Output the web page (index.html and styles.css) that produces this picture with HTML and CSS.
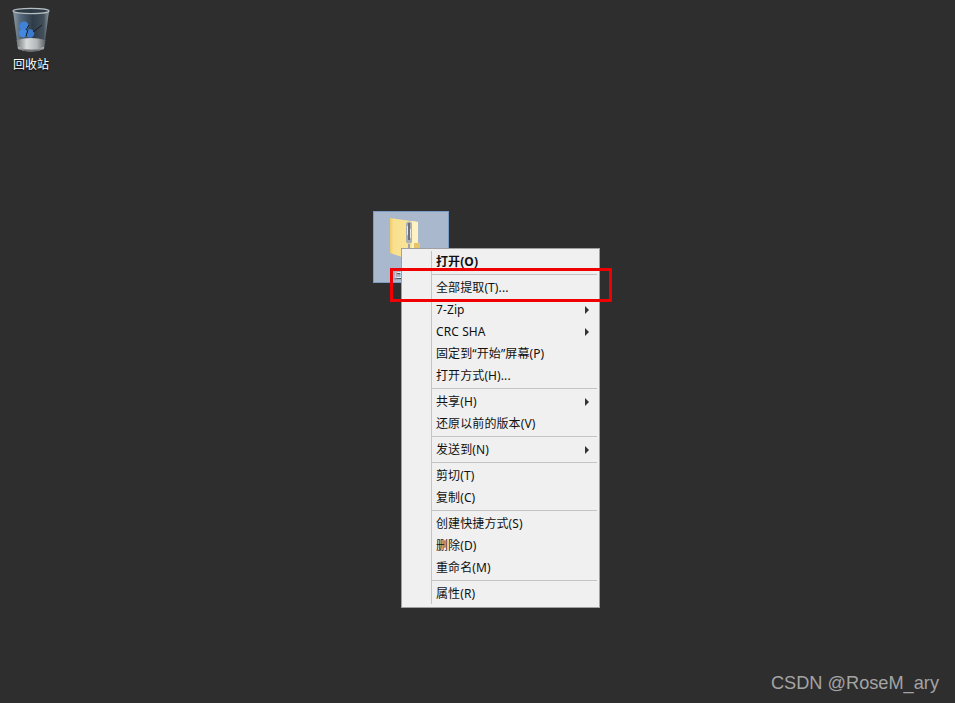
FILE: index.html
```html
<!DOCTYPE html>
<html lang="zh-CN">
<head>
  <meta charset="UTF-8">
  <title>全部提取</title>
  <link rel="stylesheet" href="styles.css">
</head>
<body>
  <div class="desktop">
    <div class="recycle">
      <svg class="recycle-icon" width="40" height="48" viewBox="0 0 40 48">
        <defs>
          <linearGradient id="binGlass" x1="0" y1="0" x2="1" y2="0">
            <stop offset="0" stop-color="#8b9aa3"/>
            <stop offset="0.2" stop-color="#56697a"/>
            <stop offset="0.55" stop-color="#2e3c49"/>
            <stop offset="0.85" stop-color="#434f59"/>
            <stop offset="1" stop-color="#8e9ba3"/>
          </linearGradient>
          <linearGradient id="binBase" x1="0" y1="0" x2="1" y2="0">
            <stop offset="0" stop-color="#6e7376"/>
            <stop offset="0.35" stop-color="#d9dbdc"/>
            <stop offset="0.7" stop-color="#b4b8ba"/>
            <stop offset="1" stop-color="#5a5f62"/>
          </linearGradient>
          <linearGradient id="binFoot" x1="0" y1="0" x2="0" y2="1">
            <stop offset="0" stop-color="#c4c7c8"/>
            <stop offset="1" stop-color="#55585b"/>
          </linearGradient>
        </defs>
        <path d="M2 5 L7 43 Q20 48 33 43 L38 5 Z" fill="url(#binGlass)"/>
        <path d="M5.5 34 Q20 30 34.5 34 L33 43 Q20 48 7 43 Z" fill="url(#binBase)"/>
        <path d="M7 41 Q20 46 33 41 L33 43 Q20 48 7 43 Z" fill="url(#binFoot)"/>
        <circle cx="13" cy="20" r="4.6" fill="#3f82d8"/>
        <circle cx="12" cy="27" r="4.2" fill="#4288e0"/>
        <circle cx="19" cy="27.5" r="4.2" fill="#3a7cd2"/>
        <path d="M15 24 L18 19 M17 24 L15 30 M22 26 L31 19" stroke="#151c22" stroke-width="1" fill="none"/>
        <ellipse cx="20" cy="5" rx="18" ry="2.6" fill="#2f3b44" stroke="#b4bdc3" stroke-width="1.3"/>
      </svg>
      <span class="recycle-label">回收站</span>
    </div>

    <div class="zip-selected">
      <svg class="zip-icon" width="32" height="40" viewBox="0 0 32 40">
        <defs>
          <linearGradient id="folderFront" x1="0" y1="0" x2="1" y2="0">
            <stop offset="0" stop-color="#eecb68"/>
            <stop offset="0.12" stop-color="#f8e08e"/>
            <stop offset="1" stop-color="#fae6a0"/>
          </linearGradient>
        </defs>
        <path d="M1 0 L29 4 L29 38 L13 39 L1 35 Z" fill="url(#folderFront)"/>
        <path d="M23 3 L29 4 L29 34 L23 35 Z" fill="#fdf2c0"/>
        <path d="M25 25 h6 v5 h-6 z" fill="#e6c56a"/>
        <path d="M17 5 Q20 2 23 5 L23 24 Q20 27 17 24 Z" fill="#aab0b5"/>
        <path d="M19 5 h2 v17 h-2 z" fill="#6a7076"/>
        <path d="M18 8 h1 v9 h-1 z M21 11 h1 v9 h-1 z" fill="#e6e9eb"/>
        <path d="M19 26 h2 v5 h-2 z" fill="#a0a3a3"/>
      </svg>
      <span class="zip-label">压</span>
    </div>

    <div class="menu">
      <div class="menu-item bold">打开(O)</div>
      <div class="menu-sep"></div>
      <div class="menu-item">全部提取(T)...</div>
      <div class="menu-item has-sub">7-Zip</div>
      <div class="menu-item has-sub">CRC SHA</div>
      <div class="menu-item">固定到“开始”屏幕(P)</div>
      <div class="menu-item">打开方式(H)...</div>
      <div class="menu-sep"></div>
      <div class="menu-item has-sub">共享(H)</div>
      <div class="menu-item">还原以前的版本(V)</div>
      <div class="menu-sep"></div>
      <div class="menu-item has-sub">发送到(N)</div>
      <div class="menu-sep"></div>
      <div class="menu-item">剪切(T)</div>
      <div class="menu-item">复制(C)</div>
      <div class="menu-sep"></div>
      <div class="menu-item">创建快捷方式(S)</div>
      <div class="menu-item">删除(D)</div>
      <div class="menu-item">重命名(M)</div>
      <div class="menu-sep"></div>
      <div class="menu-item">属性(R)</div>
    </div>

    <div class="highlight"></div>
    <div class="watermark">CSDN @RoseM_ary</div>
  </div>
</body>
</html>
```
FILE: styles.css
```css
html, body {
  margin: 0;
  height: 100%;
}

body {
  background-color: #2e2e2e;
  font-family: "Noto Sans", "Noto Sans CJK SC", sans-serif;
  overflow: hidden;
}

.desktop {
  position: relative;
  width: 955px;
  height: 703px;
}

.recycle {
  position: absolute;
  left: 0;
  top: 6px;
  width: 62px;
  display: flex;
  flex-direction: column;
  align-items: center;
  gap: 3px;
}

.recycle-icon {
  filter: blur(0.4px);
}

.recycle-label {
  color: #fff;
  font-size: 12px;
  line-height: 16px;
  text-shadow: 0 1px 2px #000;
}

.zip-selected {
  position: absolute;
  left: 373px;
  top: 211px;
  width: 74px;
  height: 70px;
  background-color: #a9b8cc;
  border: 1px solid #7d9cc4;
}

.zip-icon {
  position: absolute;
  left: 15px;
  top: 6px;
}

.zip-label {
  position: absolute;
  left: 20px;
  top: 54px;
  color: #fff;
  font-size: 12px;
  line-height: 16px;
  text-shadow: 0 1px 1px #222;
}

.menu {
  position: absolute;
  left: 401px;
  top: 248px;
  width: 193px;
  padding: 2px;
  background-color: #f0f0f0;
  border: 1px solid #a0a0a0;
  background-image: linear-gradient(#c4c4c4, #c4c4c4);
  background-size: 1px calc(100% - 5px);
  background-position: 29px 2px;
  background-repeat: no-repeat;
}

.menu-item {
  position: relative;
  height: 22px;
  line-height: 22px;
  padding-left: 32px;
  font-size: 12px;
  letter-spacing: 0.1px;
  color: #111;
}

.bold {
  font-weight: bold;
}

.has-sub::after {
  content: "";
  position: absolute;
  right: 8px;
  top: 7px;
  border-left: 4px solid #333;
  border-top: 4px solid transparent;
  border-bottom: 4px solid transparent;
}

.menu-sep {
  height: 1px;
  margin: 1px 0 2px 28px;
  background-color: #c4c4c4;
}

.highlight {
  position: absolute;
  left: 390px;
  top: 268px;
  width: 216px;
  height: 28px;
  border: 3px solid #f00000;
}

.watermark {
  position: absolute;
  right: 16px;
  top: 672px;
  color: #a4a4a4;
  font-family: "Liberation Sans", sans-serif;
  font-size: 18.2px;
  line-height: 22px;
}
```
